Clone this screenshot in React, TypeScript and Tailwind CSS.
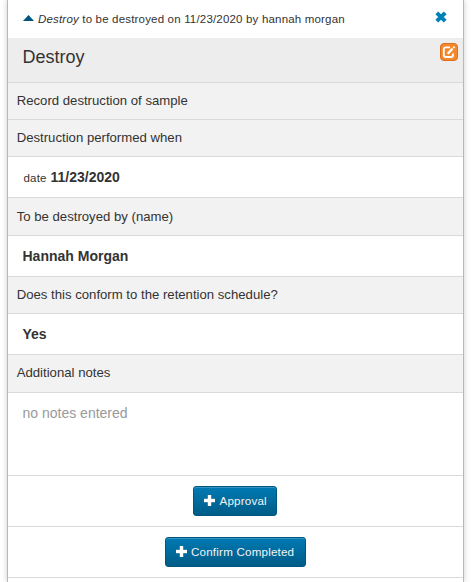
import type { ReactNode } from "react";

function Label({ children, className = "h-[37px] leading-[35px]" }: { children: ReactNode; className?: string }) {
  return (
    <div className={`border-b border-[#dadada] bg-[#f2f2f2] pl-[8.7px] text-[13.16px] ${className}`}>
      {children}
    </div>
  );
}

function Value({ children }: { children: ReactNode }) {
  return (
    <div className="h-[41px] border-b border-[#dadada] pl-[14.5px] text-[14px] leading-[41px] font-bold">
      {children}
    </div>
  );
}

function Action({ label, className }: { label: string; className: string }) {
  return (
    <div className="flex h-[51px] items-center justify-center border-b border-[#dadada] pr-px">
      <button
        className={`flex h-[30px] items-center rounded-[3px] border border-[#005580] bg-linear-to-b from-[#007ab3] to-[#005c87] pl-[10px] text-[11.6px] tracking-[0.2px] text-[#f4f4f4] shadow-[inset_0_1px_0_rgba(255,255,255,0.2)] ${className}`}
      >
        <svg className="mr-[4.5px] mb-px size-[11px] shrink-0" viewBox="0 0 11 11" fill="#fff">
          <path d="M4 0h3v4h4v3H7v4H4V7H0V4h4z" stroke="#fff" strokeWidth="0.4" />
        </svg>
        <span className="pb-px leading-[18px] whitespace-nowrap">{label}</span>
      </button>
    </div>
  );
}

export default function App() {
  return (
    <div className="h-[582px] w-[471px] overflow-hidden bg-white pl-[7px] font-['Liberation_Sans',Arial,sans-serif] text-[#333333]">
      <main className="h-[582px] w-[457px] border-x border-[#b8b8b8] bg-white shadow-[0_0_6px_rgba(0,0,0,0.2)]">
        <header className="flex h-[38px] items-center justify-between pr-[16px] pl-[15px]">
          <div className="flex items-center text-[11.5px] leading-[18px] tracking-[0.18px] whitespace-nowrap">
            <svg className="mr-[4px] mb-[2px] h-[6px] w-[11px]" viewBox="0 0 11 6" fill="#005580">
              <path d="M5.5 0 11 6H0z" />
            </svg>
            <span>
              <i>Destroy</i> to be destroyed on 11/23/2020 by hannah morgan
            </span>
          </div>
          <svg className="mb-[4px] size-[12px]" viewBox="0 0 12 12">
            <path d="M1.8 1.8l8.4 8.4M10.2 1.8l-8.4 8.4" stroke="#0080b8" strokeWidth="4" />
          </svg>
        </header>
        <section className="flex h-[45px] justify-between border-b border-[#dadada] bg-[#ededed] pr-[5px] pl-[14.5px]">
          <h1 className="text-[18px] leading-[38px]">Destroy</h1>
          <button className="mt-[5px] flex size-[18px] items-center justify-center rounded-[4px] border border-[#d96f20] bg-[#f4892b]">
            <svg className="size-[14px]" viewBox="0 0 14 14" fill="none" stroke="#fff">
              <path d="M8 2.3H3.8Q1.8 2.3 1.8 4.3V10Q1.8 12 3.8 12H9Q11 12 11 10V8.5" strokeWidth="1.8" />
              <path d="M5.7 8.7 10.6 3.6" strokeWidth="2.3" />
              <path d="M11.3 2.9 12.5 1.7" strokeWidth="2" />
            </svg>
          </button>
        </section>
        <Label>Record destruction of sample</Label>
        <Label>Destruction performed when</Label>
        <Value>
          <span className="ml-px text-[11.5px] font-normal tracking-[0.18px]">date</span> 11/23/2020
        </Value>
        <Label className="h-[38px] leading-[37px]">To be destroyed by (name)</Label>
        <Value>Hannah Morgan</Value>
        <Label>Does this conform to the retention schedule?</Label>
        <Value>Yes</Value>
        <Label className="h-[38px] leading-[35px]">Additional notes</Label>
        <div className="h-[83px] border-b border-[#dadada] pl-[14.5px] text-[14px] leading-[40px] text-[#999999]">
          no notes entered
        </div>
        <Action label="Approval" className="w-[84px]" />
        <Action label="Confirm Completed" className="w-[141px]" />
      </main>
    </div>
  );
}
